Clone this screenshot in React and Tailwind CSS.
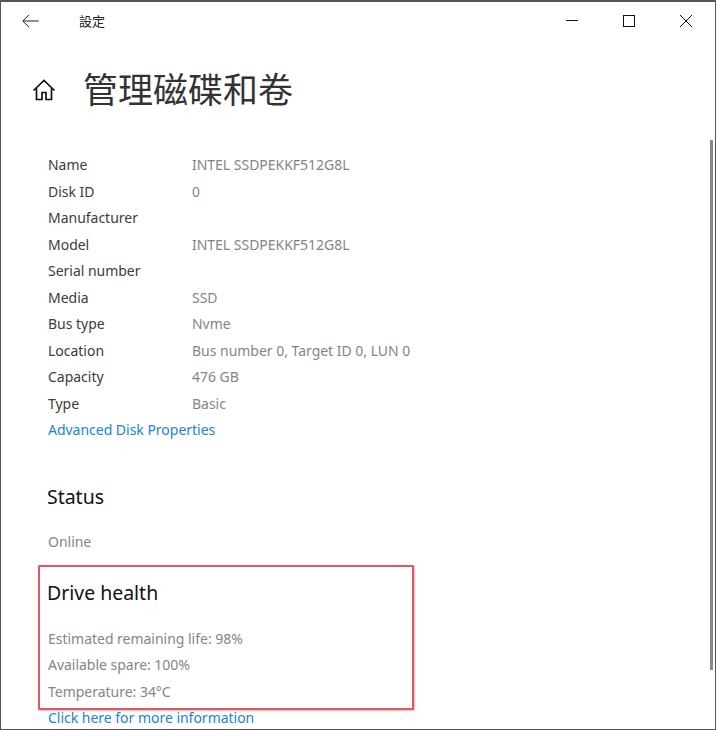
const rows = [
  ["Name", "INTEL SSDPEKKF512G8L"],
  ["Disk ID", "0"],
  ["Manufacturer", ""],
  ["Model", "INTEL SSDPEKKF512G8L"],
  ["Serial number", ""],
  ["Media", "SSD"],
  ["Bus type", "Nvme"],
  ["Location", "Bus number 0, Target ID 0, LUN 0"],
  ["Capacity", "476 GB"],
  ["Type", "Basic"],
];

const health = [
  "Estimated remaining life: 98%",
  "Available spare: 100%",
  "Temperature: 34°C",
];

function HomeIcon() {
  return (
    <svg width="24" height="24" viewBox="0 0 24 24" fill="none" stroke="#111" strokeWidth="1.7">
      <path d="M1.5 12.5 12 2.5l10.5 10" />
      <path d="M4.5 10v11.5h5.5v-7h4v7h5.500V10" />
    </svg>
  );
}

function BackArrow() {
  return (
    <svg width="17" height="14" viewBox="0 0 17 14" fill="none" stroke="#222" strokeWidth="1">
      <path d="M.8 7h16M7 .8.8 7 7 13.200" />
    </svg>
  );
}

function WindowButtons() {
  return (
    <div className="flex items-center ml-auto">
      <svg width="14" height="14" viewBox="0 0 14 14" className="mr-[43px]" stroke="#111" strokeWidth="1">
        <path d="M1 6.500h12" />
      </svg>
      <svg width="14" height="14" viewBox="0 0 14 14" className="mr-[43px]" fill="none" stroke="#111" strokeWidth="1">
        <rect x="1.500" y="1.500" width="11" height="11" />
      </svg>
      <svg width="14" height="14" viewBox="0 0 14 14" stroke="#111" strokeWidth="1">
        <path d="M1 1l12 12M13 1 1 13" />
      </svg>
    </div>
  );
}

export default function App() {
  return (
    <div className="relative w-[716px] h-[730px] overflow-hidden bg-white border-t-2 border-l border-r border-b border-[#555] font-['Noto_Sans','Noto_Sans_CJK_SC',sans-serif]">
      {/* title bar */}
      <div className="flex items-center h-[38px] pl-[21px] pr-[22px]">
        <BackArrow />
        <span className="ml-[40px] text-[13px] mt-[2px] text-[#222]">設定</span>
        <WindowButtons />
      </div>

      {/* page heading */}
      <div className="flex items-center mt-[24px] pl-[31px]">
        <HomeIcon />
        <h1 className="ml-[27px] text-[35px] leading-[52px] font-normal text-[#333]">管理磁碟和卷</h1>
      </div>

      {/* properties */}
      <div className="mt-[36px] pl-[47px] text-[14px] leading-[26.550px] tracking-[-0.02px]">
        {rows.map(([label, value]) => (
          <div key={label} className="flex h-[26.550px]">
            <span className="w-[144px] text-[#3c3c3c]">{label}</span>
            <span className="text-[#858585]">{value}</span>
          </div>
        ))}
        <div className="text-[#1a82d4]">Advanced Disk Properties</div>

        <h2 className="-ml-[1px] mt-[38px] text-[19.500px] leading-[30px] font-normal text-[#111]">Status</h2>
        <div className="mt-[17px] text-[#858585]">Online</div>

        <h2 className="-ml-[1px] mt-[22px] text-[19.500px] leading-[30px] font-normal text-[#111]">Drive health</h2>
        <div className="mt-[18px] text-[#858585]">
          {health.map((line) => (
            <div key={line}>{line}</div>
          ))}
        </div>
        <div className="text-[#1a82d4]">Click here for more information</div>
      </div>

      {/* red highlight drawn over the screenshot */}
      <div className="absolute left-[37px] top-[563px] w-[376px] h-[145px] rounded-[1px] border-2 border-[#dd5a60] shadow-[1px_1px_2px_rgba(0,0,0,0.25)]" />

      {/* scrollbar */}
      <div className="absolute left-[709px] top-[138px] w-[3px] h-[530px] bg-[#8a8a8a]" />
    </div>
  );
}
